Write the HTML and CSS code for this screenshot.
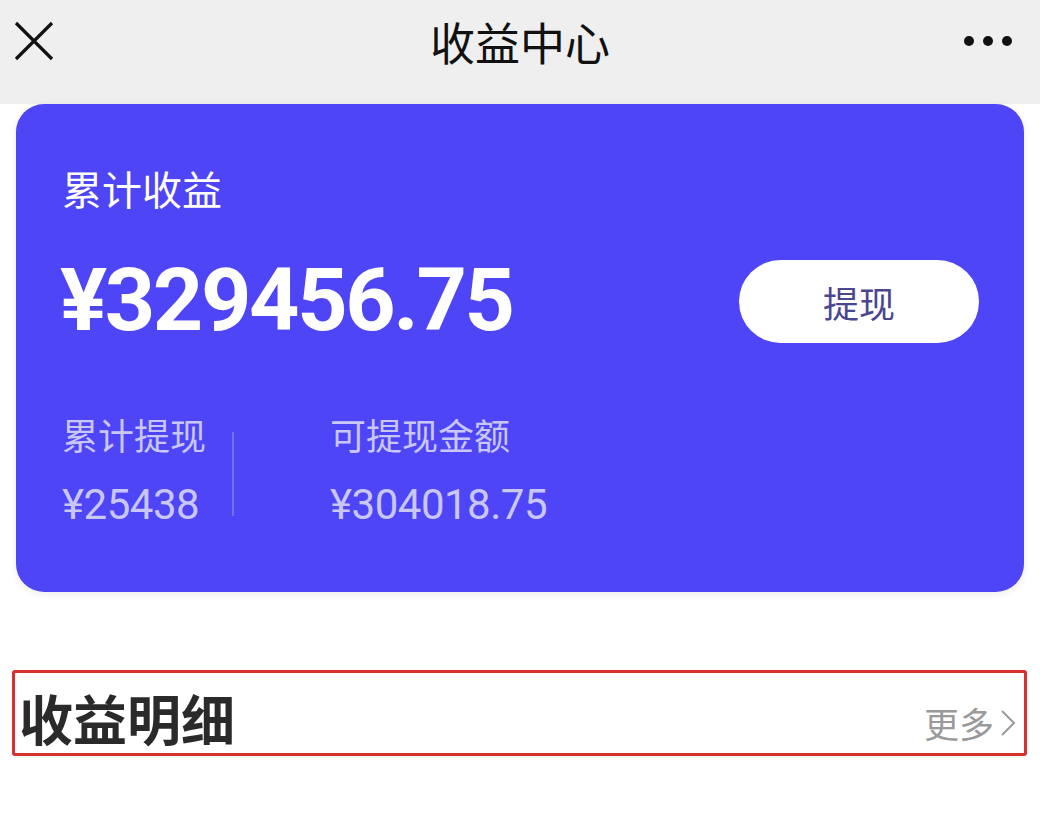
FILE: index.html
```html
<!DOCTYPE html>
<html lang="zh-CN">
<head>
<meta charset="utf-8">
<title>收益中心</title>
<link rel="stylesheet" href="styles.css">
</head>
<body>
<div class="page">
  <header class="header">
    <div class="nav">
      <svg class="close" width="40" height="40" viewBox="0 0 40 40">
        <path d="M2 2 L38 38 M38 2 L2 38" stroke="#111" stroke-width="3.2" fill="none"/>
      </svg>
      <div class="title">收益中心</div>
      <div class="more-dots"><span></span><span></span><span></span></div>
    </div>
  </header>

  <section class="card">
    <div class="card-label">累计收益</div>
    <div class="amount-row">
      <div class="amount">¥329456.75</div>
      <button class="withdraw">提现</button>
    </div>
    <div class="stats">
      <div class="stat">
        <div class="stat-label">累计提现</div>
        <div class="stat-value">¥25438</div>
      </div>
      <div class="divider"></div>
      <div class="stat">
        <div class="stat-label">可提现金额</div>
        <div class="stat-value">¥304018.75</div>
      </div>
    </div>
  </section>

  <section class="detail">
    <div class="detail-title">收益明细</div>
    <div class="detail-more">更多<svg class="chev" width="16" height="28" viewBox="0 0 16 28"><polyline points="2,2 14,14 2,26" fill="none" stroke="#9a9a9a" stroke-width="2"/></svg></div>
  </section>
</div>
</body>
</html>
```

FILE: styles.css
```css
* { box-sizing: border-box; }
html, body { margin: 0; padding: 0; background: #fff; }
body {
  font-family: "Noto Sans CJK SC", "Noto Sans", sans-serif;
  width: 1040px;
  height: 824px;
  overflow: hidden;
}
.header {
  background: #efefef;
  height: 104px;
}
.nav {
  height: 88px;
  display: flex;
  align-items: center;
  justify-content: space-between;
  padding: 0 28px 0 14px;
  position: relative;
}
.close { display: block; margin-top: -6px; }
.title {
  position: absolute;
  left: 0; right: 0;
  text-align: center;
  font-size: 45px;
  line-height: 45px;
  color: #111;
  pointer-events: none;
  margin-top: -6px;
}
.more-dots {
  display: flex;
  gap: 9px;
  margin-top: -6px;
}
.more-dots span {
  width: 10px; height: 10px;
  border-radius: 50%;
  background: #111;
}
.card {
  margin: 0 16px;
  background: #4e45f6;
  border-radius: 28px;
  padding: 64px 45px 65px 46px;
  color: #fff;
  box-shadow: 0 2px 8px rgba(0,0,0,0.08);
  height: 488px;
}
.card-label {
  font-size: 40px;
  line-height: 40px;
  color: #fff;
}
.amount-row {
  margin-top: 48px;
  display: flex;
  align-items: center;
  justify-content: space-between;
}
.amount {
  font-family: Roboto, "Liberation Sans", sans-serif;
  font-weight: 700;
  font-size: 88px;
  line-height: 88px;
  letter-spacing: -2.4px;
  margin-left: -2px;
}
.withdraw {
  width: 240px;
  height: 83px;
  border: none;
  border-radius: 42px;
  background: #fff;
  color: #4b468f;
  font-family: "Noto Sans CJK SC", sans-serif;
  font-size: 36px;
  padding: 0;
  margin-top: 3px;
}
.stats {
  margin-top: 72px;
  display: flex;
  align-items: center;
}
.stat-label {
  font-size: 36px;
  line-height: 36px;
  color: #c9c7f8;
}
.stat-value {
  margin-top: 32px;
  font-family: Roboto, "Liberation Sans", sans-serif;
  font-size: 42px;
  line-height: 42px;
  color: #c9c7f8;
  letter-spacing: -0.5px;
}
.divider {
  width: 2px;
  height: 84px;
  background: rgba(255,255,255,0.22);
  margin: 6px 96px 0 26px;
  align-self: center;
}
.detail {
  margin: 78px 13px 0 12px;
  height: 86px;
  border: 3px solid #d8302f;
  border-radius: 3px;
  display: flex;
  align-items: flex-end;
  justify-content: space-between;
  padding: 0 8px 4px 4px;
}
.detail-title {
  font-size: 54px;
  line-height: 62px;
  font-weight: 700;
  color: #2a2a2a;
}
.detail-more {
  font-size: 35px;
  line-height: 40px;
  color: #9a9a9a;
  display: flex;
  align-items: center;
  gap: 6px;
  margin-bottom: 6px;
}
.chev { display: block; }
```
